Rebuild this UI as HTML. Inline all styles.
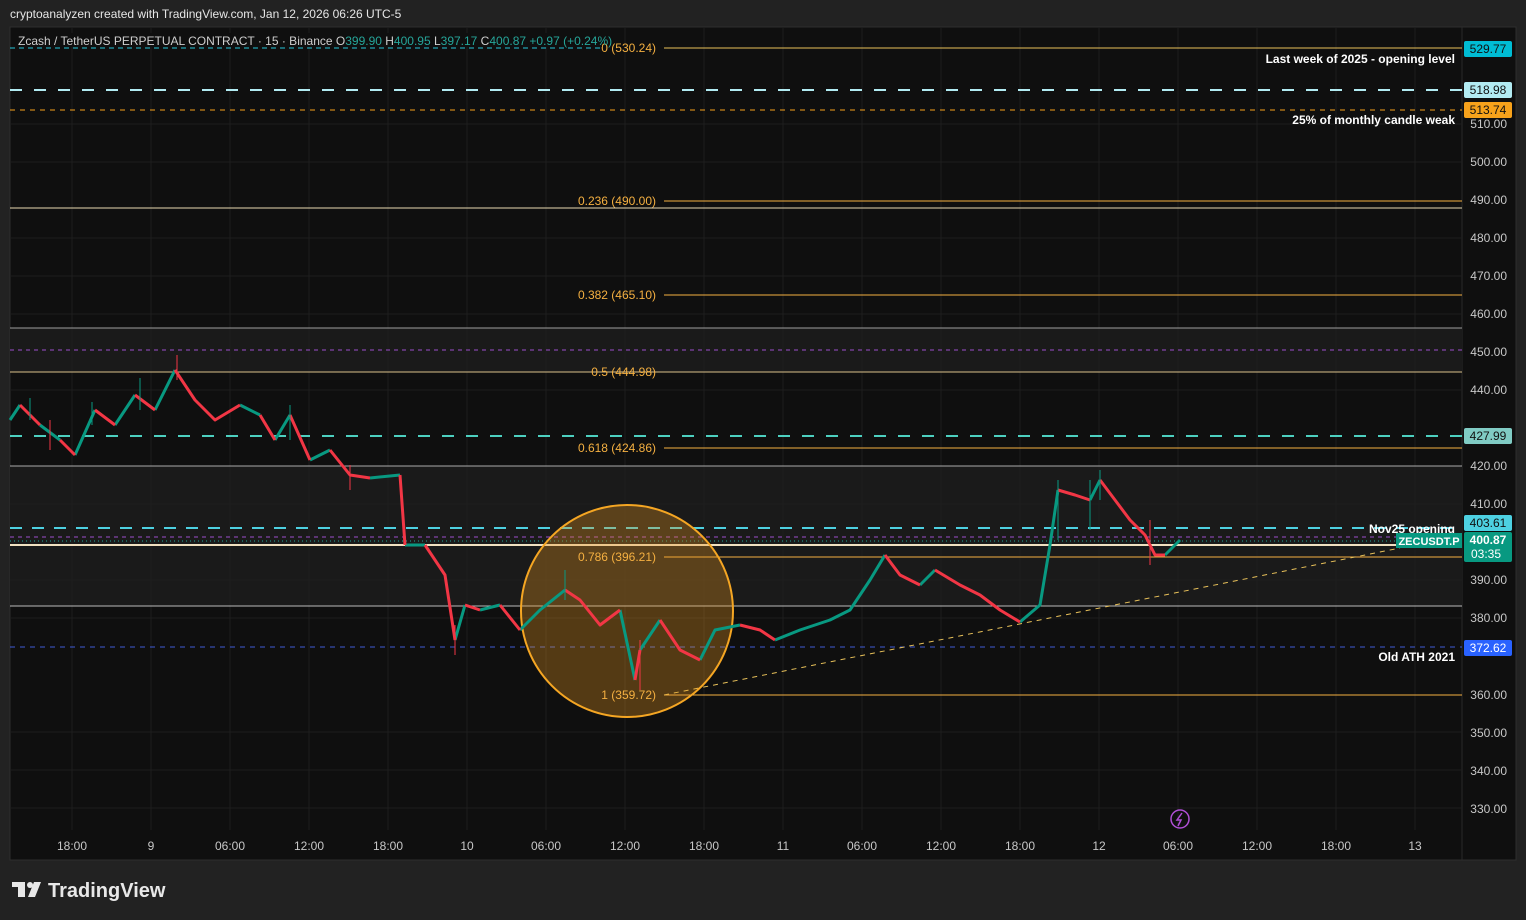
<!DOCTYPE html>
<html><head><meta charset="utf-8"><style>
html,body{margin:0;padding:0;background:#222;width:1526px;height:920px;overflow:hidden;font-family:"Liberation Sans",sans-serif}
svg text{font-family:"Liberation Sans",sans-serif}
</style></head><body>
<svg width="1526" height="920" xmlns="http://www.w3.org/2000/svg">
<rect x="0" y="0" width="1526" height="920" fill="#222"/>
<text x="10" y="18" fill="#e6e6e6" font-size="12">cryptoanalyzen created with TradingView.com, Jan 12, 2026 06:26 UTC-5</text>
<rect x="10" y="27" width="1506" height="833" fill="#0f0f0f" stroke="#2e2e2e"/>
<line x1="1462" y1="27" x2="1462" y2="860" stroke="#2a2a2a"/>
<rect x="10" y="328" width="1452" height="44" fill="#1a1a1a"/>
<rect x="10" y="466" width="1452" height="140" fill="#1a1a1a"/>
<g stroke="#1e1e1e" shape-rendering="crispEdges">
<line x1="72" y1="28" x2="72" y2="830"/><line x1="151" y1="28" x2="151" y2="830"/><line x1="230" y1="28" x2="230" y2="830"/><line x1="309" y1="28" x2="309" y2="830"/><line x1="388" y1="28" x2="388" y2="830"/><line x1="467" y1="28" x2="467" y2="830"/><line x1="546" y1="28" x2="546" y2="830"/><line x1="625" y1="28" x2="625" y2="830"/><line x1="704" y1="28" x2="704" y2="830"/><line x1="783" y1="28" x2="783" y2="830"/><line x1="862" y1="28" x2="862" y2="830"/><line x1="941" y1="28" x2="941" y2="830"/><line x1="1020" y1="28" x2="1020" y2="830"/><line x1="1099" y1="28" x2="1099" y2="830"/><line x1="1178" y1="28" x2="1178" y2="830"/><line x1="1257" y1="28" x2="1257" y2="830"/><line x1="1336" y1="28" x2="1336" y2="830"/><line x1="1415" y1="28" x2="1415" y2="830"/>
<line x1="10" y1="124" x2="1462" y2="124"/><line x1="10" y1="162" x2="1462" y2="162"/><line x1="10" y1="238" x2="1462" y2="238"/><line x1="10" y1="276" x2="1462" y2="276"/><line x1="10" y1="314" x2="1462" y2="314"/><line x1="10" y1="390" x2="1462" y2="390"/><line x1="10" y1="504" x2="1462" y2="504"/><line x1="10" y1="580" x2="1462" y2="580"/><line x1="10" y1="618" x2="1462" y2="618"/><line x1="10" y1="732" x2="1462" y2="732"/><line x1="10" y1="770" x2="1462" y2="770"/><line x1="10" y1="808" x2="1462" y2="808"/>
</g>
<g shape-rendering="crispEdges">
<line x1="10" y1="48" x2="600" y2="48" stroke="#26c6da" stroke-dasharray="5 4"/>
<line x1="664" y1="48" x2="1462" y2="48" stroke="#e8c15a"/>
<line x1="10" y1="90" x2="1462" y2="90" stroke="#b2ebf2" stroke-width="2" stroke-dasharray="12 12"/>
<line x1="10" y1="110" x2="1462" y2="110" stroke="#f7a21b" stroke-dasharray="5 5"/>
<line x1="664" y1="201" x2="1462" y2="201" stroke="#f5b041"/>
<line x1="10" y1="208" x2="1462" y2="208" stroke="#e8d9b0"/>
<line x1="664" y1="295" x2="1462" y2="295" stroke="#f5b041"/>
<line x1="10" y1="328" x2="1462" y2="328" stroke="#9e9e9e"/>
<line x1="10" y1="350" x2="1462" y2="350" stroke="#9c4dcc" stroke-dasharray="4 4"/>
<line x1="10" y1="372" x2="1462" y2="372" stroke="#d9c08a"/>
<line x1="10" y1="436" x2="1462" y2="436" stroke="#4dd0c0" stroke-width="2" stroke-dasharray="12 12"/>
<line x1="664" y1="448" x2="1462" y2="448" stroke="#f5b041"/>
<line x1="10" y1="466" x2="1462" y2="466" stroke="#aaa"/>
<line x1="10" y1="528" x2="1462" y2="528" stroke="#4dd0e1" stroke-width="2" stroke-dasharray="12 10"/>
<line x1="10" y1="537" x2="1462" y2="537" stroke="#9c4dcc" stroke-dasharray="4 4"/>
<line x1="10" y1="541" x2="1462" y2="541" stroke="#26a69a" stroke-dasharray="1 3"/>
<line x1="10" y1="545" x2="1462" y2="545" stroke="#f0e0c0" stroke-width="2"/>
<line x1="664" y1="557" x2="1462" y2="557" stroke="#f5b041"/>
<line x1="10" y1="606" x2="1462" y2="606" stroke="#bbb"/>
<line x1="10" y1="647" x2="1462" y2="647" stroke="#3f5bd6" stroke-dasharray="5 5"/>
<line x1="664" y1="695" x2="1462" y2="695" stroke="#f5b041"/>
</g>
<line x1="664" y1="695" x2="1400" y2="548" stroke="#e8c15a" stroke-dasharray="5 5"/>
<circle cx="627" cy="611" r="106" fill="rgba(230,150,30,0.32)" stroke="#f5a623" stroke-width="2"/>
<g fill="none" stroke-width="3" stroke-linejoin="round">
<path stroke="#089981" d="M10,420 L20,405 M40,425 L60,440 M75,455 L95,410 M115,425 L135,395 M155,410 L175,370 M240,405 L260,415 M275,440 L290,415 M310,460 L330,450 M370,478 L400,475 M405,545 L425,545 M455,640 L465,605 M480,610 L500,605 M520,630 L540,610 L565,590 M620,610 L635,680 M640,650 L660,620 M700,660 L715,630 L740,625 M775,640 L800,630 L830,620 L850,610 L870,580 L885,555 M920,585 L935,570 M1020,622 L1040,605 L1050,545 L1058,490 M1090,500 L1100,480 M1165,555 L1180,540"/>
<path stroke="#f23645" d="M20,405 L40,425 M60,440 L75,455 M95,410 L115,425 M135,395 L155,410 M175,370 L195,400 L215,420 L240,405 M260,415 L275,440 M290,415 L310,460 M330,450 L350,475 L370,478 M400,475 L405,545 M425,545 L445,575 L455,640 M465,605 L480,610 M500,605 L520,630 M565,590 L580,600 L600,625 L620,610 M635,680 L640,650 M660,620 L680,650 L700,660 M740,625 L760,630 L775,640 M885,555 L900,575 L920,585 M935,570 L960,585 L980,595 L1000,610 L1020,622 M1058,490 L1075,495 L1090,500 M1100,480 L1115,500 L1130,520 L1145,535 L1155,555 L1165,555"/>
</g>
<g stroke-width="1"><path stroke="#089981" d="M565,570V600 M1090,480V530 M1100,470V500 M1058,480V540 M30,398V420 M92,402V425 M140,378V410 M290,405V440"/><path stroke="#f23645" d="M640,640V690 M177,355V380 M1150,520V565 M455,625V655 M50,420V450 M350,465V490"/></g>
<g fill="#f5b041" font-size="12" text-anchor="end">
<text x="656" y="52">0 (530.24)</text>
<text x="656" y="205">0.236 (490.00)</text>
<text x="656" y="299">0.382 (465.10)</text>
<text x="656" y="376">0.5 (444.98)</text>
<text x="656" y="452">0.618 (424.86)</text>
<text x="656" y="561">0.786 (396.21)</text>
<text x="656" y="699">1 (359.72)</text>
</g>
<rect x="12" y="33" width="590" height="14" fill="#0f0f0f"/>
<text x="18" y="45" font-size="12" fill="#cfcfcf">Zcash / TetherUS PERPETUAL CONTRACT · 15 · Binance  O<tspan fill="#26a69a">399.90</tspan>  H<tspan fill="#26a69a">400.95</tspan>  L<tspan fill="#26a69a">397.17</tspan>  C<tspan fill="#26a69a">400.87  +0.97 (+0.24%)</tspan></text>
<g fill="#fff" font-size="12" font-weight="bold" text-anchor="end">
<text x="1455" y="63">Last week of 2025 - opening level</text>
<text x="1455" y="124">25% of monthly candle weak</text>
<text x="1455" y="533">Nov25 opening</text>
<text x="1455" y="661">Old ATH 2021</text>
</g>
<g fill="#c8c8c8" font-size="12" text-anchor="end">
<text x="1507" y="128">510.00</text><text x="1507" y="166">500.00</text><text x="1507" y="204">490.00</text><text x="1507" y="242">480.00</text><text x="1507" y="280">470.00</text><text x="1507" y="318">460.00</text><text x="1507" y="356">450.00</text><text x="1507" y="394">440.00</text><text x="1507" y="470">420.00</text><text x="1507" y="508">410.00</text><text x="1507" y="584">390.00</text><text x="1507" y="622">380.00</text><text x="1507" y="699">360.00</text><text x="1507" y="737">350.00</text><text x="1507" y="775">340.00</text><text x="1507" y="813">330.00</text>
</g>
<g font-size="12" text-anchor="middle">
<rect x="1464" y="41" width="48" height="16" rx="2" fill="#00bcd4"/><text x="1488" y="53" fill="#111">529.77</text>
<rect x="1464" y="82" width="48" height="16" rx="2" fill="#b2ebf2"/><text x="1488" y="94" fill="#111">518.98</text>
<rect x="1464" y="102" width="48" height="16" rx="2" fill="#f7a21b"/><text x="1488" y="114" fill="#111">513.74</text>
<rect x="1464" y="428" width="48" height="16" rx="2" fill="#80cbc4"/><text x="1488" y="440" fill="#111">427.99</text>
<rect x="1464" y="515" width="48" height="16" rx="2" fill="#4dd0e1"/><text x="1488" y="527" fill="#111">403.61</text>
<rect x="1464" y="532" width="48" height="30" rx="2" fill="#089981"/><text x="1488" y="544" fill="#fff" font-weight="bold">400.87</text><text x="1486" y="558" fill="#fff">03:35</text>
<rect x="1396" y="533" width="66" height="15" fill="#089981"/><text x="1429" y="545" fill="#fff" font-weight="bold" font-size="11">ZECUSDT.P</text>
<rect x="1464" y="640" width="48" height="16" rx="2" fill="#2962ff"/><text x="1488" y="652" fill="#fff">372.62</text>
</g>
<circle cx="1180" cy="819" r="9" fill="none" stroke="#b04fd6" stroke-width="1.5"/>
<path d="M1182,813 L1177,820 L1181,820 L1178,826" stroke="#b04fd6" fill="none" stroke-width="1.5"/>
<g fill="#c8c8c8" font-size="12" text-anchor="middle">
<text x="72" y="850">18:00</text><text x="151" y="850">9</text><text x="230" y="850">06:00</text><text x="309" y="850">12:00</text><text x="388" y="850">18:00</text><text x="467" y="850">10</text><text x="546" y="850">06:00</text><text x="625" y="850">12:00</text><text x="704" y="850">18:00</text><text x="783" y="850">11</text><text x="862" y="850">06:00</text><text x="941" y="850">12:00</text><text x="1020" y="850">18:00</text><text x="1099" y="850">12</text><text x="1178" y="850">06:00</text><text x="1257" y="850">12:00</text><text x="1336" y="850">18:00</text><text x="1415" y="850">13</text>
</g>
<g fill="#e8e8e8">
<rect x="12" y="882" width="13" height="5"/><rect x="18" y="882" width="7" height="15"/>
<circle cx="30" cy="885" r="3"/>
<path d="M34,882 L41,882 L35,897 L28,897 Z"/>
</g>
<text x="48" y="897" fill="#e8e8e8" font-size="20" font-weight="bold">TradingView</text>
</svg>
</body></html>
